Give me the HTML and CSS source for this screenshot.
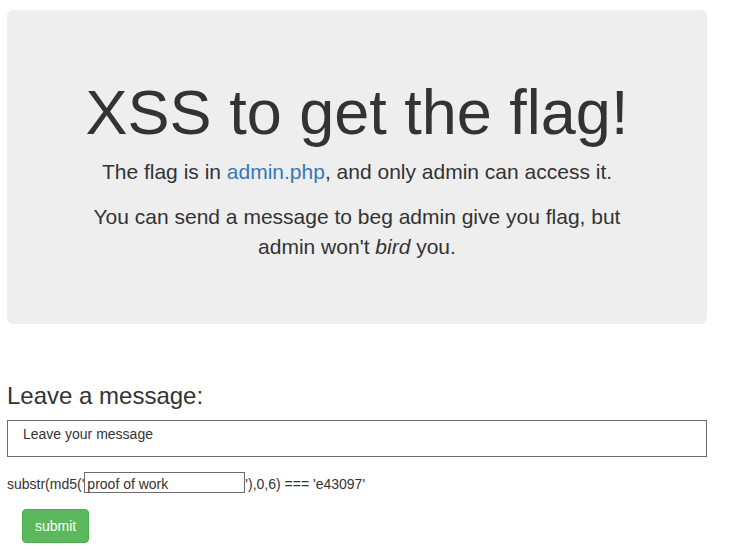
FILE: index.html
```html
<!DOCTYPE html>
<html>
<head>
<meta charset="utf-8">
<title>XSS to get the flag!</title>
<link rel="stylesheet" href="styles.css">
</head>
<body>
<div class="container">
  <div class="jumbotron">
    <h1>XSS to get the flag!</h1>
    <p>The flag is in <a href="admin.php">admin.php</a>, and only admin can access it.</p>
    <p>You can send a message to beg admin give you flag, but admin won't <i>bird</i> you.</p>
  </div>
  <form class="msg-form">
    <h3>Leave a message:</h3>
    <textarea class="message" placeholder="Leave your message"></textarea>
    <div class="pow">substr(md5('<input class="pow-input" type="text" placeholder="proof of work">'),0,6) === 'e43097'</div>
    <button class="btn-submit" type="submit">submit</button>
  </form>
</div>
</body>
</html>
```

FILE: styles.css
```css
html, body {
  margin: 0;
  padding: 0;
  background: #fff;
}
body {
  font-family: "Liberation Sans", Arial, sans-serif;
  font-size: 14px;
  line-height: 1.42857;
  color: #333;
}
.container {
  width: 700px;
  margin-left: 7px;
  padding-top: 10px;
}
.jumbotron {
  background: #eee;
  border-radius: 6px;
  padding: 48px 60px 47px;
  margin-bottom: 30px;
  text-align: center;
}
.jumbotron h1 {
  font-size: 63px;
  font-weight: 500;
  line-height: 1.1;
  margin: 20px 0 10px;
}
.jumbotron p {
  font-size: 21px;
  font-weight: 200;
  margin: 0 0 15px;
}
.jumbotron a {
  color: #337ab7;
  text-decoration: none;
}
.msg-form h3 {
  font-size: 24px;
  font-weight: 500;
  line-height: 1.1;
  margin: 59px 0 10px;
}
.message {
  display: block;
  box-sizing: border-box;
  width: 700px;
  height: 37px;
  border: 1px solid #6b6b6b;
  padding: 3px 15px;
  font-family: "Liberation Sans", Arial, sans-serif;
  font-size: 14px;
  line-height: 20px;
  resize: none;
  margin: 0;
}
.message::placeholder {
  color: #333;
}
.pow {
  font-size: 14px;
  margin-top: 15px;
  line-height: 24px;
}
.pow-input {
  box-sizing: border-box;
  width: 161px;
  height: 21px;
  border: 1px solid #6b6b6b;
  padding: 4px 2px 0;
  font-family: "Liberation Sans", Arial, sans-serif;
  font-size: 14px;
  line-height: 16px;
  margin: 0;
  vertical-align: top;
}
.pow-input::placeholder {
  color: #333;
}
.btn-submit {
  display: block;
  margin: 13px 0 0 15px;
  background: #5cb85c;
  border: 1px solid #4cae4c;
  border-radius: 4px;
  color: #fff;
  font-family: "Liberation Sans", Arial, sans-serif;
  font-size: 14px;
  line-height: 20px;
  padding: 6px 12px;
}
```
